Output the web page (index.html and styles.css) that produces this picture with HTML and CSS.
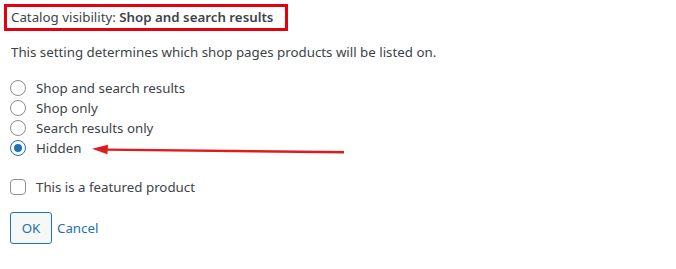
FILE: index.html
```html
<!DOCTYPE html>
<html>
<head>
  <meta charset="UTF-8">
  <title>Catalog visibility</title>
  <link rel="stylesheet" href="styles.css">
</head>
<body>
<div class="panel">
  <div class="visibility-title">Catalog visibility: <strong>Shop and search results</strong></div>
  <p class="desc">This setting determines which shop pages products will be listed on.</p>
  <ul class="options">
    <li><label><input type="radio" name="vis"> Shop and search results</label></li>
    <li><label><input type="radio" name="vis"> Shop only</label></li>
    <li><label><input type="radio" name="vis"> Search results only</label></li>
    <li><label><input type="radio" name="vis" checked> Hidden</label></li>
  </ul>
  <label class="featured"><input type="checkbox"> This is a featured product</label>
  <div class="actions">
    <button class="btn" type="button">OK</button>
    <a class="cancel" href="#">Cancel</a>
  </div>
  <!-- annotation arrow -->
  <svg class="arrow" width="260" height="12" viewBox="0 0 260 12">
    <path d="M14 5.6 L252 8.2" stroke="#e31a1a" stroke-width="2.4" fill="none"/>
    <path d="M0 4.8 L16 0.8 L15.4 10.2 Z" fill="#e31a1a"/>
  </svg>
</div>
</body>
</html>
```

FILE: styles.css
```css
body {
  margin: 0;
  padding: 0;
  background: #fff;
  font-family: 'Noto Sans', 'Open Sans', Arial, sans-serif;
  font-size: 13.3px;
  color: #3c434a;
}
.panel {
  position: relative;
  padding: 4px 0 0 4px;
}
/* red highlight frame around the title */
.visibility-title {
  display: inline-block;
  border: 3px solid #e3000f;
  padding: 0 12px 0 4px;
  height: 21px;
  line-height: 21px;
}
.visibility-title strong {
  font-weight: 600;
}
.desc {
  margin: 11px 0 0 7px;
  line-height: 20px;
}
.options {
  list-style: none;
  margin: 16px 0 0 6px;
  padding: 0;
}
.options li {
  height: 20px;
  line-height: 20px;
}
.options label,
.featured {
  display: flex;
  align-items: center;
  gap: 10px;
}
input[type="radio"],
input[type="checkbox"] {
  -webkit-appearance: none;
  appearance: none;
  margin: 0;
  width: 16px;
  height: 16px;
  border: 1px solid #8c8f94;
  background: #fff;
  box-sizing: border-box;
  position: relative;
  flex: none;
}
input[type="radio"] {
  border-radius: 50%;
}
input[type="radio"]:checked {
  border-color: #2271b1;
}
input[type="radio"]:checked::before {
  content: "";
  position: absolute;
  left: 3px;
  top: 3px;
  width: 8px;
  height: 8px;
  border-radius: 50%;
  background: #2271b1;
}
input[type="checkbox"] {
  border-radius: 4px;
}
.featured {
  margin: 19px 0 0 6px;
  height: 20px;
}
.actions {
  display: flex;
  align-items: center;
  gap: 5px;
  margin: 15px 0 0 6px;
}
.btn {
  font-family: inherit;
  font-size: 13.3px;
  color: #2271b1;
  background: #f6f7f7;
  border: 1px solid #2271b1;
  border-radius: 3px;
  width: 42px;
  height: 32px;
  padding: 0;
}
.cancel {
  color: #2271b1;
  text-decoration: none;
}
.arrow {
  position: absolute;
  left: 92px;
  top: 144px;
}
```
